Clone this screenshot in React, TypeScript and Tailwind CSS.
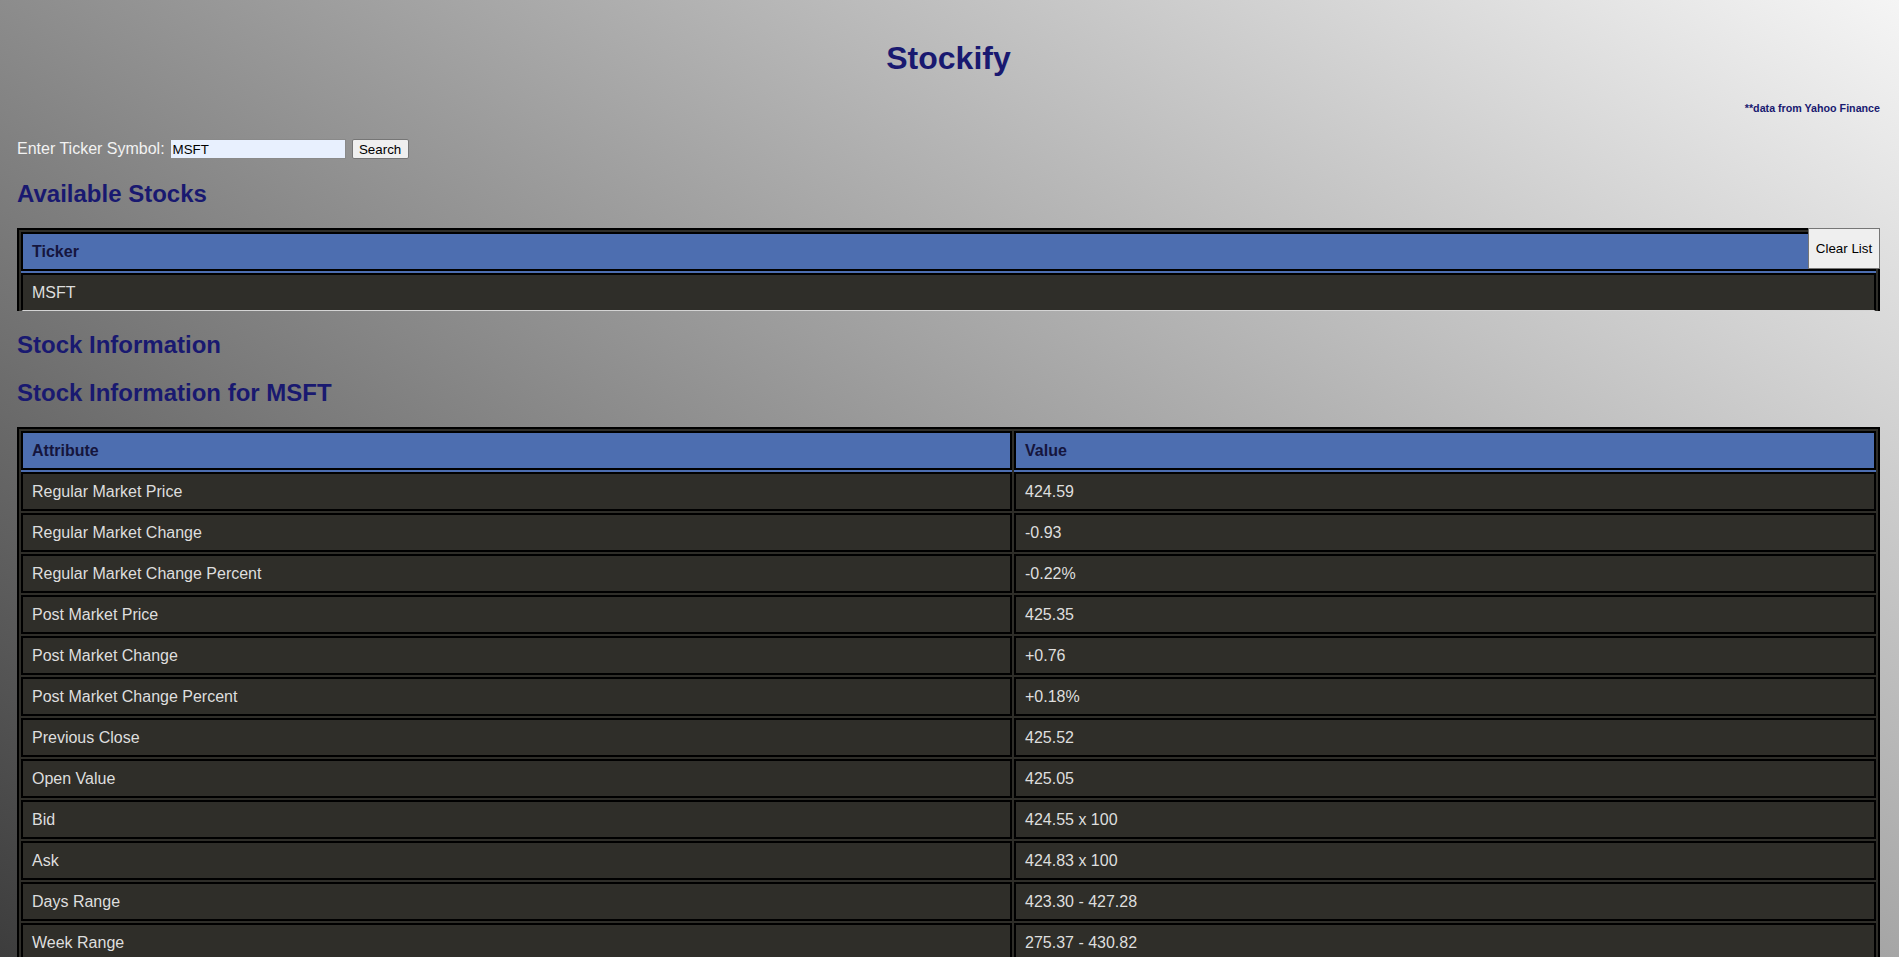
import { useState } from "react";

const stockRows: [string, string][] = [
  ["Regular Market Price", "424.59"],
  ["Regular Market Change", "-0.93"],
  ["Regular Market Change Percent", "-0.22%"],
  ["Post Market Price", "425.35"],
  ["Post Market Change", "+0.76"],
  ["Post Market Change Percent", "+0.18%"],
  ["Previous Close", "425.52"],
  ["Open Value", "425.05"],
  ["Bid", "424.55 x 100"],
  ["Ask", "424.83 x 100"],
  ["Days Range", "423.30 - 427.28"],
  ["Week Range", "275.37 - 430.82"],
  ["Volume", "16,272,087"],
  ["Average Volume", "20,871,446"],
  ["Market Cap", "3.155T"],
  ["Beta", "0.89"],
  ["PE Ratio", "36.70"],
  ["EPS", "11.57"],
  ["Target Estimate", "467.53"],
];

export default function App() {
  const [ticker, setTicker] = useState("MSFT");
  const [tickers, setTickers] = useState<string[]>(["MSFT"]);

  return (
    <div className="min-h-screen flow-root bg-[linear-gradient(to_top_right,#232323,#f5f5f5)] pt-[40px] pl-[17px] pr-[19px] pb-[16px] font-['Liberation_Sans',Arial,sans-serif]">
      <h1 className="text-center text-[32px] leading-[37px] font-bold text-[#191970]">Stockify</h1>
      <p className="mt-[25px] text-right text-[10.7px] leading-[12px] font-bold text-[#191970]">**data from Yahoo Finance</p>

      {/* Search row */}
      <div className="mt-[25px] flex h-[20px] items-center">
        <label className="mr-[5px] text-[16px] leading-[18px] text-[#f2f2f2]">Enter Ticker Symbol:</label>
        <input
          value={ticker}
          onChange={(e) => setTicker(e.target.value)}
          className="h-[20px] w-[176px] border border-[#8a8a8a] bg-[#e8f0fe] px-[2px] text-[13.33px] text-black outline-none"
        />
        <button
          onClick={() => ticker && !tickers.includes(ticker) && setTickers([...tickers, ticker])}
          className="ml-[6px] h-[20px] w-[57px] rounded-[2px] border border-[#767676] bg-[#efefef] text-[13.33px] text-black"
        >
          Search
        </button>
      </div>

      <h2 className="mt-[21px] text-[24px] leading-[28px] font-bold text-[#191970]">Available Stocks</h2>

      {/* Ticker list */}
      <div className="relative mt-[20px] h-[83px] overflow-hidden">
        <div className="flex flex-col gap-[2px] border-2 border-black bg-[#2f2e29] p-[2px]">
          <div className="border-2 border-black bg-[#4d6eb0] px-[9px] py-2 text-[16px] leading-[19px] font-bold text-[#15153d] shadow-[0_2px_0_#4d6eb0]">
            Ticker
          </div>
          {tickers.map((t) => (
            <div
              key={t}
              className="border-x-2 border-t-2 border-b border-black border-b-[#d4d4d4] bg-[#2f2e29] px-[9px] py-2 text-[16px] leading-[19px] text-[#dedede]"
            >
              {t}
            </div>
          ))}
        </div>
        <button
          onClick={() => setTickers([])}
          className="absolute top-0 right-0 h-[41px] w-[72px] border border-[#767676] bg-[#efefef] text-[13.33px] text-black"
        >
          Clear List
        </button>
      </div>

      <h2 className="mt-[20px] text-[24px] leading-[28px] font-bold text-[#191970]">Stock Information</h2>
      <h2 className="mt-[20px] text-[24px] leading-[28px] font-bold text-[#191970]">Stock Information for MSFT</h2>

      {/* Stock info table */}
      <div className="mt-[20px] grid grid-cols-[991px_1fr] gap-[2px] border-2 border-black bg-[#2f2e29] p-[2px] text-[16px] leading-[19px]">
        <div className="border-2 border-black bg-[#4d6eb0] px-[9px] py-2 font-bold text-[#15153d] shadow-[0_2px_0_#4d6eb0]">Attribute</div>
        <div className="border-2 border-black bg-[#4d6eb0] px-[9px] py-2 font-bold text-[#15153d] shadow-[0_2px_0_#4d6eb0]">Value</div>
        {stockRows.map(([name, value]) => (
          <>
            <div key={name} className="border-2 border-black bg-[#2f2e29] px-[9px] py-2 text-[#dedede]">{name}</div>
            <div key={name + "-v"} className="border-2 border-black bg-[#2f2e29] px-[9px] py-2 text-[#dedede]">{value}</div>
          </>
        ))}
      </div>
    </div>
  );
}
